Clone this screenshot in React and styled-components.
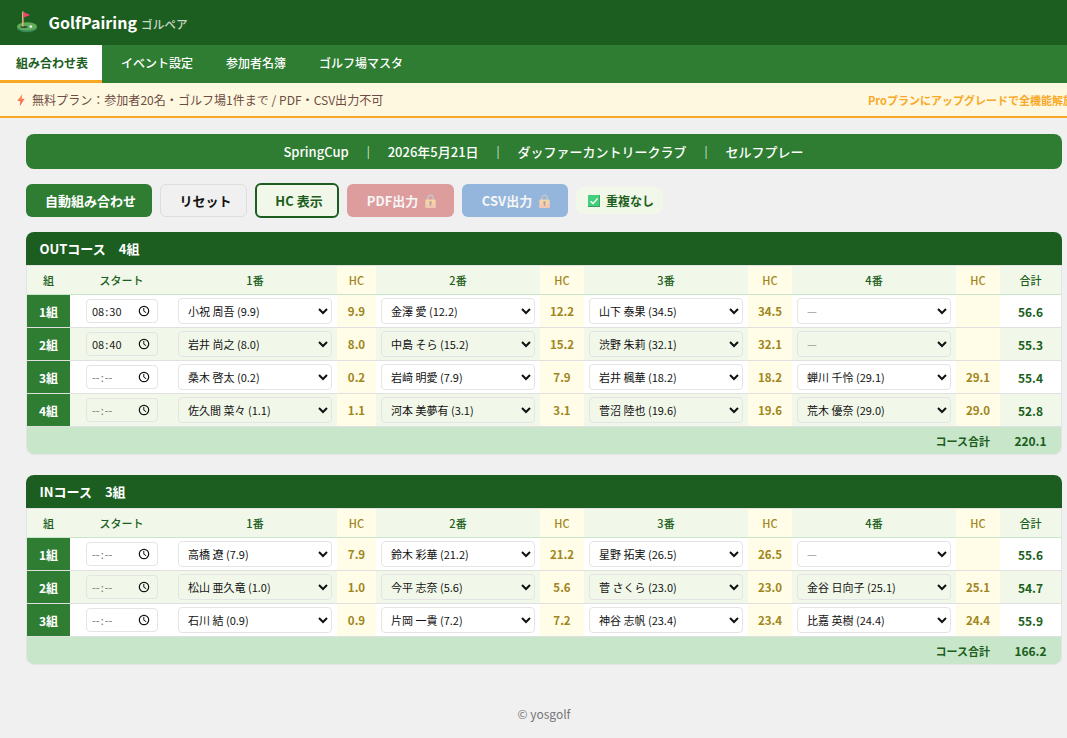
import styled, { createGlobalStyle } from "styled-components";

const courses = [
  {
    name: "OUTコース",
    total: "220.1",
    groups: [
      { start: "08:30", players: [["小祝 周吾", "9.9"], ["金澤 愛", "12.2"], ["山下 泰果", "34.5"], null], total: "56.6" },
      { start: "08:40", players: [["岩井 尚之", "8.0"], ["中島 そら", "15.2"], ["渋野 朱莉", "32.1"], null], total: "55.3" },
      { start: "", players: [["桑木 啓太", "0.2"], ["岩﨑 明愛", "7.9"], ["岩井 楓華", "18.2"], ["蝉川 千怜", "29.1"]], total: "55.4" },
      { start: "", players: [["佐久間 菜々", "1.1"], ["河本 美夢有", "3.1"], ["菅沼 陸也", "19.6"], ["荒木 優奈", "29.0"]], total: "52.8" },
    ],
  },
  {
    name: "INコース",
    total: "166.2",
    groups: [
      { start: "", players: [["高橋 遼", "7.9"], ["鈴木 彩華", "21.2"], ["星野 拓実", "26.5"], null], total: "55.6" },
      { start: "", players: [["松山 亜久竜", "1.0"], ["今平 志奈", "5.6"], ["菅 さくら", "23.0"], ["金谷 日向子", "25.1"]], total: "54.7" },
      { start: "", players: [["石川 結", "0.9"], ["片岡 一貴", "7.2"], ["神谷 志帆", "23.4"], ["比嘉 英樹", "24.4"]], total: "55.9" },
    ],
  },
];

const tabs = ["組み合わせ表", "イベント設定", "参加者名簿", "ゴルフ場マスタ"];

function GolfIcon() {
  return (
    <svg width="22" height="22" viewBox="0 0 22 22">
      <ellipse cx="11" cy="17.2" rx="10" ry="4" fill="#35895b" />
      <ellipse cx="11" cy="15.4" rx="10" ry="4.2" fill="#5fad58" />
      <ellipse cx="8" cy="16" rx="3.6" ry="1" fill="#2d4d36" />
      <path d="M6 .6h1.6v15H6z" fill="#deb07e" />
      <path d="M7.6 1l6.4 2.9-6.4 2.9z" fill="#f8416c" />
      <circle cx="14.8" cy="15.6" r="1.4" fill="#e8eef0" />
    </svg>
  );
}

function BoltIcon() {
  return (
    <svg width="14" height="14" viewBox="0 0 14 14">
      <defs>
        <linearGradient id="bolt" x1="0" y1="0" x2="0" y2="1">
          <stop offset="0" stopColor="#ffa33d" />
          <stop offset="1" stopColor="#f4506a" />
        </linearGradient>
      </defs>
      <path d="M8.2.9L3.3 8h3L5.7 13.2l5-7.5H7.8z" fill="url(#bolt)" />
    </svg>
  );
}

function LockIcon() {
  return (
    <svg width="13" height="14" viewBox="0 0 13 14">
      <path d="M3.7 6.5V4.1a2.8 2.8 0 0 1 5.6 0v2.4" fill="none" stroke="#86909a" strokeWidth="1.4" />
      <rect x="1.4" y="5.4" width="10.2" height="8.3" rx="0.8" fill="#fdb13f" />
      <path d="M1.4 10h10.2v3a.7.7 0 0 1-.7.7H2.1a.7.7 0 0 1-.7-.7z" fill="#f98f58" />
      <circle cx="6.5" cy="8.6" r="1.3" fill="#533440" />
      <path d="M5.9 9h1.2v3H5.9z" fill="#533440" />
    </svg>
  );
}

function CheckIcon() {
  return (
    <svg width="14" height="14" viewBox="0 0 14 14">
      <rect x="1" y="1" width="12" height="12" rx="0.6" fill="#43cf7c" />
      <path d="M1 12h12v.4a.6.6 0 0 1-.6.6H1.6a.6.6 0 0 1-.6-.6zM12.3 1h.7v12h-.7z" fill="#2e9f61" />
      <path d="M3.6 7.2l2.4 2.4 4.6-5.2" fill="none" stroke="#fff" strokeWidth="1.4" />
    </svg>
  );
}

function ClockIcon() {
  return (
    <svg width="12" height="12" viewBox="0 0 12 12" fill="none" stroke="#111">
      <circle cx="6" cy="6" r="4.7" strokeWidth="1.2" />
      <path d="M5.8 3v3.2l2.4 1.5" strokeWidth="1" />
    </svg>
  );
}

function StartTime({ value }) {
  const [hour, minute] = value ? value.split(":") : ["--", "--"];

  return (
    <TimeField>
      <TimeText $empty={!value}>
        {hour}
        <Colon>:</Colon>
        {minute}
      </TimeText>
      <ClockIcon />
    </TimeField>
  );
}

function PlayerSelect({ player, striped }) {
  return (
    <Select $striped={striped} $empty={!player} defaultValue="p">
      <option value="p">{player ? `${player[0]} (${player[1]})` : "—"}</option>
    </Select>
  );
}

function CourseTable({ course }) {
  return (
    <Card>
      <CardTitle>
        {course.name}　{course.groups.length}組
      </CardTitle>
      <CardBody>
        <HeadRow>
          <HeadCell>組</HeadCell>
          <HeadCell>スタート</HeadCell>
          {[1, 2, 3, 4].map((n) => [
            <HeadCell key={n}>{n}番</HeadCell>,
            <HcHead key={`hc${n}`}>HC</HcHead>,
          ])}
          <HeadCell>合計</HeadCell>
        </HeadRow>
        {course.groups.map((group, i) => (
          <Row key={i} $striped={i % 2 === 1}>
            <GroupCell>{i + 1}組</GroupCell>
            <Cell>
              <StartTime value={group.start} />
            </Cell>
            {group.players.map((player, j) => [
              <Cell key={j}>
                <PlayerSelect player={player} striped={i % 2 === 1} />
              </Cell>,
              <HcCell key={`hc${j}`}>{player && player[1]}</HcCell>,
            ])}
            <TotalCell>{group.total}</TotalCell>
          </Row>
        ))}
        <FootRow>
          <FootLabel>コース合計</FootLabel>
          <FootTotal>{course.total}</FootTotal>
        </FootRow>
      </CardBody>
    </Card>
  );
}

export default function App() {
  return (
    <Viewport>
      <GlobalStyle />
      <Page>
        <Header>
          <GolfIcon />
          <Brand>GolfPairing</Brand>
          <BrandSub>ゴルペア</BrandSub>
        </Header>
        <Nav>
          {tabs.map((tab, i) => (
            <Tab key={tab} $active={i === 0}>
              {tab}
            </Tab>
          ))}
        </Nav>
        <PlanBar>
          <PlanText>
            <BoltIcon />
            <span>無料プラン：参加者20名・ゴルフ場1件まで / PDF・CSV出力不可</span>
          </PlanText>
          <Upgrade>Proプランにアップグレードで全機能解放</Upgrade>
        </PlanBar>
        <Main>
          <EventBar>
            <span>SpringCup</span>
            <Divider>｜</Divider>
            <span>2026年5月21日</span>
            <Divider>｜</Divider>
            <span>ダッファーカントリークラブ</span>
            <Divider>｜</Divider>
            <span>セルフプレー</span>
          </EventBar>
          <Toolbar>
            <PrimaryButton>自動組み合わせ</PrimaryButton>
            <ResetButton>リセット</ResetButton>
            <HcButton>HC 表示</HcButton>
            <LockedButton $width={107} $color="#c62828">
              PDF出力 <LockIcon />
            </LockedButton>
            <LockedButton $width={106} $color="#1565c0">
              CSV出力 <LockIcon />
            </LockedButton>
            <Status>
              <CheckIcon />
              重複なし
            </Status>
          </Toolbar>
          {courses.map((course) => (
            <CourseTable key={course.name} course={course} />
          ))}
        </Main>
        <Footer>© yosgolf</Footer>
      </Page>
    </Viewport>
  );
}

const GlobalStyle = createGlobalStyle`
  * {
    box-sizing: border-box;
  }
  body {
    margin: 0;
    background: #f0f0f0;
    color: #212121;
    font-family: "Noto Sans CJK JP", sans-serif;
    font-size: 13px;
  }
  button, select {
    font-family: inherit;
  }
  svg {
    flex-shrink: 0;
  }
`;

const Viewport = styled.div`
  height: 738px;
  overflow: hidden;
`;

const Page = styled.div`
  width: 1088px;
`;

const Header = styled.header`
  height: 45px;
  display: flex;
  align-items: center;
  padding: 0 16px 2px;
  background: #1b5e20;
  color: #fff;
`;

const Brand = styled.div`
  margin-left: 10.5px;
  font-size: 16px;
  font-weight: 700;
`;

const BrandSub = styled.div`
  margin: 3px 0 0 4px;
  font-size: 11.7px;
  font-weight: 500;
  color: rgba(255, 255, 255, 0.75);
`;

const Nav = styled.nav`
  display: flex;
  height: 38px;
  background: #2e7d32;
`;

const Tab = styled.div`
  display: flex;
  align-items: center;
  padding: 0 ${(p) => (p.$active ? "14px" : "16px")} 0 16px;
  margin-right: ${(p) => (p.$active ? "3px" : "1px")};
  font-size: 12px;
  font-weight: ${(p) => (p.$active ? 700 : 500)};
  color: ${(p) => (p.$active ? "#1b5e20" : "#fff")};
  background: ${(p) => (p.$active ? "#fff" : "transparent")};
  border-bottom: 3px solid ${(p) => (p.$active ? "#f9a825" : "transparent")};
`;

const PlanBar = styled.div`
  display: flex;
  align-items: center;
  justify-content: space-between;
  height: 35px;
  padding: 0 16px 0 14px;
  background: #fff8e1;
  border-bottom: 2px solid #f9a825;
`;

const PlanText = styled.div`
  display: flex;
  align-items: center;
  gap: 4px;
  font-size: 12.05px;
  color: #6d4c41;
`;

const Upgrade = styled.div`
  width: 204px;
  white-space: nowrap;
  font-size: 11px;
  font-weight: 700;
  color: #f9a825;
`;

const Main = styled.main`
  padding: 16px 26px 0;
`;

const EventBar = styled.div`
  display: flex;
  align-items: center;
  justify-content: center;
  height: 35px;
  padding-right: 1px;
  border-radius: 8px;
  background: #2e7d32;
  color: #fff;
  font-weight: 500;
`;

const Divider = styled.span`
  width: 39px;
  text-align: center;
`;

const Toolbar = styled.div`
  display: flex;
  align-items: center;
  gap: 8px;
  height: 35px;
  margin: 14px 0;
`;

const Button = styled.button`
  height: 33px;
  padding: 0;
  display: flex;
  align-items: center;
  justify-content: center;
  border: none;
  border-radius: 6px;
  font-size: 13px;
  font-weight: 700;
  cursor: pointer;
`;

const PrimaryButton = styled(Button)`
  width: 126px;
  padding-left: 3px;
  background: #2e7d32;
  color: #fff;
`;

const ResetButton = styled(Button)`
  width: 87px;
  padding-left: 4px;
  background: #f0f0f0;
  color: #111;
  border: 1px solid #ddd;
`;

const HcButton = styled(Button)`
  width: 84px;
  height: 35px;
  padding-left: 4px;
  background: #f1f8e9;
  color: #1b5e20;
  border: 2px solid #1b5e20;
`;

const LockedButton = styled(Button)`
  width: ${(p) => p.$width}px;
  gap: 6px;
  padding-left: 3px;
  background: ${(p) => p.$color};
  color: #fff;
  opacity: 0.41;
`;

const Status = styled.div`
  display: flex;
  align-items: center;
  gap: 5px;
  height: 27px;
  padding: 0 9px 0 11px;
  border-radius: 8px;
  background: #f1f8e9;
  color: #1b5e20;
  font-size: 12px;
  font-weight: 700;
`;

const Card = styled.section`
  margin-bottom: 20px;
`;

const CardTitle = styled.div`
  display: flex;
  align-items: center;
  height: 33px;
  padding-left: 13.5px;
  border-radius: 8px 8px 0 0;
  background: #1b5e20;
  color: #fff;
  font-weight: 700;
`;

const CardBody = styled.div`
  border: 1px solid #e4e4e4;
  border-radius: 0 0 8px 8px;
  overflow: hidden;
`;

const Row = styled.div`
  display: grid;
  grid-template-columns: 43px 103px 164px 39px 164px 44px 164px 44px 164px 44px 61px;
  height: 33px;
  border-bottom: 1px solid #e0e0e0;
  background: ${(p) => (p.$striped ? "#f1f8e9" : "#fff")};
`;

const HeadRow = styled(Row)`
  height: 29px;
  background: #f1f8e9;
  border-bottom-color: #c8e6c9;
`;

const Cell = styled.div`
  display: flex;
  align-items: center;
  justify-content: center;
`;

const HeadCell = styled(Cell)`
  font-size: 11px;
  font-weight: 500;
  color: #1b5e20;
`;

const HcHead = styled(HeadCell)`
  background: #fffde7;
  color: #a08520;
`;

const GroupCell = styled(Cell)`
  padding-top: 1px;
  background: #2e7d32;
  color: #fff;
  font-size: 12px;
  font-weight: 700;
`;

const HcCell = styled(Cell)`
  background: #fffde7;
  color: #a08520;
  font-size: 11.5px;
  font-weight: 700;
`;

const TotalCell = styled(Cell)`
  color: #1b5e20;
  font-size: 12px;
  font-weight: 700;
`;

const TimeField = styled.div`
  display: flex;
  align-items: center;
  justify-content: space-between;
  width: 72px;
  height: 24px;
  padding: 0 7px 0 5.5px;
  border: 1px solid #e4e4e4;
  border-radius: 4px;
`;

const TimeText = styled.span`
  font-size: 11px;
  color: ${(p) => (p.$empty ? "#757575" : "#212121")};
`;

const Colon = styled.span`
  padding: 0 1px;
`;

/* the fill colour greys the dash but leaves the arrow dark */
const Select = styled.select`
  width: 154px;
  height: 26px;
  padding: 0 5px;
  border: 1px solid #e4e4e4;
  border-radius: 4px;
  background: ${(p) => (p.$striped ? "#f1f8e9" : "#fff")};
  color: #111;
  -webkit-text-fill-color: ${(p) => (p.$empty ? "#9e9e9e" : "#111")};
  font-size: 11px;
`;

const FootRow = styled.div`
  display: grid;
  grid-template-columns: 1fr 61px;
  align-items: center;
  height: 27px;
  background: #c8e6c9;
  color: #1b5e20;
  font-weight: 700;
`;

const FootLabel = styled.div`
  padding-right: 10px;
  text-align: right;
  font-size: 11px;
`;

const FootTotal = styled.div`
  text-align: center;
  font-size: 12px;
`;

const Footer = styled.footer`
  padding-top: 20px;
  text-align: center;
  font-size: 12px;
  color: #757575;
`;
